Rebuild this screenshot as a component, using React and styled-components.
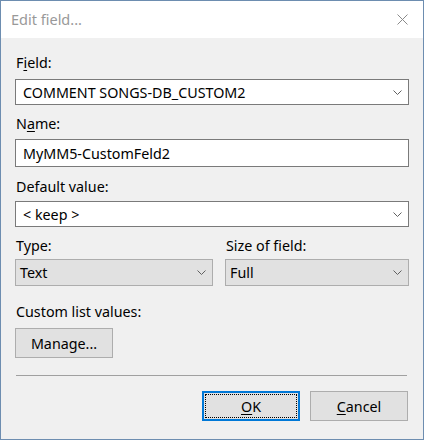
import React from "react";
import styled, { createGlobalStyle } from "styled-components";

const GlobalStyle = createGlobalStyle`
  html, body {
    margin: 0;
    padding: 0;
    background: #f0f0f0;
  }
  * {
    box-sizing: border-box;
  }
`;

const Chevron = () => (
  <svg width="9" height="5" viewBox="0 0 9 5">
    <path d="M0.5 0.5 L4.5 4.5 L8.5 0.5" fill="none" stroke="#606060" strokeWidth="1" />
  </svg>
);

const CloseIcon = () => (
  <svg width="11" height="11" viewBox="0 0 11 11">
    <path d="M0.5 0.5 L10.5 10.5 M10.5 0.5 L0.5 10.5" stroke="#8a8a8a" strokeWidth="1" />
  </svg>
);

const App = () => {
  return (
    <>
      <GlobalStyle />
      <Window>
        <TitleBar>
          <Title>Edit field...</Title>
          <CloseButton>
            <CloseIcon />
          </CloseButton>
        </TitleBar>
        <Content>
          <Group>
            <Label $gap={6}>
              F<u>i</u>eld:
            </Label>
            <Combo>
              <span>COMMENT SONGS-DB_CUSTOM2</span>
              <Chevron />
            </Combo>
          </Group>

          <Group $top={9}>
            <Label $gap={5}>
              N<u>a</u>me:
            </Label>
            <TextBox>MyMM5-CustomFeld2</TextBox>
          </Group>

          <Group $top={10}>
            <Label $gap={4}>Default value:</Label>
            <Combo>
              <span>&lt; keep &gt;</span>
              <Chevron />
            </Combo>
          </Group>

          <Columns $top={9}>
            <Group>
              <Label $gap={3}>Type:</Label>
              <Combo $readOnly>
                <span>Text</span>
                <Chevron />
              </Combo>
            </Group>
            <Group>
              <Label $gap={3}>Size of field:</Label>
              <Combo $readOnly>
                <span>Full</span>
                <Chevron />
              </Combo>
            </Group>
          </Columns>

          <Group $top={16}>
            <Label $gap={6}>Custom list values:</Label>
            <Button>Manage...</Button>
          </Group>

          <Separator />

          <ButtonRow>
            <Button $default>
              <Focus>
                <u>O</u>K
              </Focus>
            </Button>
            <Button>
              <u>C</u>ancel
            </Button>
          </ButtonRow>
        </Content>
      </Window>
    </>
  );
};

const Window = styled.div`
  width: 424px;
  height: 440px;
  border: 1px solid #6d8db0;
  display: flex;
  flex-direction: column;
  background: #f0f0f0;
  font-family: "Noto Sans", "Liberation Sans", sans-serif;
  font-size: 14.3px;
  color: #000;
`;

const TitleBar = styled.div`
  height: 37px;
  background: #fff;
  display: flex;
  align-items: center;
  justify-content: space-between;
  padding: 0 15px 0 10px;
`;

const Title = styled.div`
  color: #999;
  font-size: 14.5px;
  line-height: 20px;
  margin-top: -2px;
`;

const CloseButton = styled.div`
  display: flex;
  align-items: center;
  margin-top: -1px;
`;

const Content = styled.div`
  flex: 1;
  padding: 15px 14px 0 14px;
  display: flex;
  flex-direction: column;
`;

const Group = styled.div`
  display: flex;
  flex-direction: column;
  margin-top: ${(p) => p.$top || 0}px;
`;

const Columns = styled.div`
  display: grid;
  grid-template-columns: 198px 1fr;
  column-gap: 12px;
  margin-top: ${(p) => p.$top || 0}px;
`;

const Label = styled.div`
  line-height: 20px;
  height: 20px;
  padding-left: 1px;
  margin-bottom: ${(p) => p.$gap}px;
  white-space: nowrap;

  u {
    text-decoration-thickness: 1px;
    text-underline-offset: 2px;
  }
`;

const Combo = styled.div`
  height: ${(p) => (p.$readOnly ? 27 : 26)}px;
  display: flex;
  align-items: center;
  justify-content: space-between;
  padding: 0 6px 0 ${(p) => (p.$readOnly ? 4 : 7)}px;
  background: ${(p) => (p.$readOnly ? "#e1e1e1" : "#fff")};
  border: 1px solid ${(p) => (p.$readOnly ? "#adadad" : "#7a7a7a")};
  white-space: nowrap;

  svg {
    flex-shrink: 0;
  }
`;

const TextBox = styled.div`
  height: 28px;
  display: flex;
  align-items: center;
  padding: 0 7px;
  background: #fff;
  border: 1px solid #7a7a7a;
`;

const Button = styled.div`
  width: 98px;
  height: 30px;
  display: flex;
  align-items: center;
  justify-content: center;
  background: #e1e1e1;
  border: ${(p) => (p.$default ? "2px solid #0078d7" : "1px solid #adadad")};
  padding: ${(p) => (p.$default ? "1px" : "0")};

  u {
    text-decoration-thickness: 1px;
    text-underline-offset: 2px;
  }
`;

const Focus = styled.div`
  width: 100%;
  height: 100%;
  border: 1px dotted #000;
  display: flex;
  align-items: center;
  justify-content: center;
`;

const Separator = styled.div`
  height: 1px;
  background: #a0a0a0;
  margin: 17px 2px 0 1px;
`;

const ButtonRow = styled.div`
  display: flex;
  justify-content: flex-end;
  gap: 10px;
  margin-top: 15px;
  padding-right: 1px;
`;

export default App;
